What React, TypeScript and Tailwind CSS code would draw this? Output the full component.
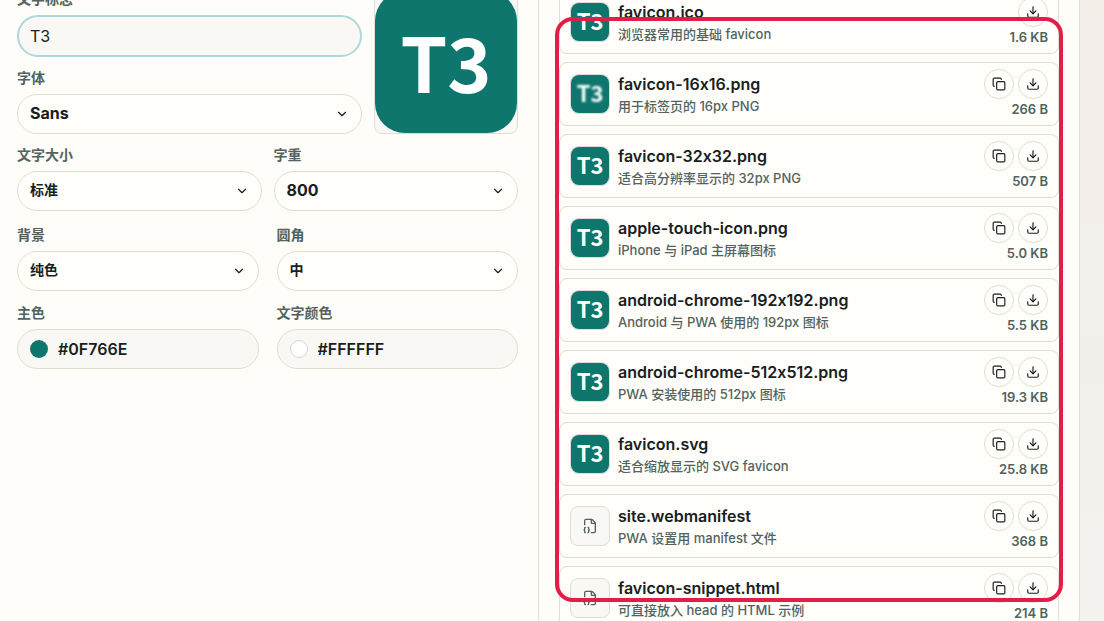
import { ChevronDown, Copy, Download, FileJson2 } from 'lucide-react'
import type { ReactNode } from 'react'

type IconFile = {
  name: string
  detail: string
  size: string
  kind: 'image' | 'soft' | 'code'
  copyable: boolean
}

const files: IconFile[] = [
  { name: 'favicon.ico', detail: '浏览器常用的基础 favicon', size: '1.6 KB', kind: 'image', copyable: false },
  { name: 'favicon-16x16.png', detail: '用于标签页的 16px PNG', size: '266 B', kind: 'soft', copyable: true },
  { name: 'favicon-32x32.png', detail: '适合高分辨率显示的 32px PNG', size: '507 B', kind: 'image', copyable: true },
  { name: 'apple-touch-icon.png', detail: 'iPhone 与 iPad 主屏幕图标', size: '5.0 KB', kind: 'image', copyable: true },
  { name: 'android-chrome-192x192.png', detail: 'Android 与 PWA 使用的 192px 图标', size: '5.5 KB', kind: 'image', copyable: true },
  { name: 'android-chrome-512x512.png', detail: 'PWA 安装使用的 512px 图标', size: '19.3 KB', kind: 'image', copyable: true },
  { name: 'favicon.svg', detail: '适合缩放显示的 SVG favicon', size: '25.8 KB', kind: 'image', copyable: true },
  { name: 'site.webmanifest', detail: 'PWA 设置用 manifest 文件', size: '368 B', kind: 'code', copyable: true },
  { name: 'favicon-snippet.html', detail: '可直接放入 head 的 HTML 示例', size: '214 B', kind: 'code', copyable: true },
]

function Label({ htmlFor, children }: { htmlFor: string; children: ReactNode }) {
  return (
    <label htmlFor={htmlFor} className="text-sm leading-5 font-bold text-[#52635f]">
      {children}
    </label>
  )
}

type SelectFieldProps = { id: string; label: string; options: string[]; latin?: boolean }

function SelectField({ id, label, options, latin = false }: SelectFieldProps) {
  return (
    <div className="flex flex-col gap-1.5">
      <Label htmlFor={id}>{label}</Label>
      <div className="relative">
        <select
          id={id}
          className={`block h-10 w-full appearance-none rounded-full border border-[#deded2] bg-[#fffefa] pr-9 pb-0.5 pl-3 font-bold text-[#17201e] ${latin ? 'text-base' : 'text-sm'}`}
        >
          {options.map((option) => (
            <option key={option}>{option}</option>
          ))}
        </select>
        <ChevronDown className="pointer-events-none absolute top-[13px] right-[13px] h-3.5 w-3.5" />
      </div>
    </div>
  )
}

function ColorField({ id, label, value, swatch }: { id: string; label: string; value: string; swatch: string }) {
  return (
    <div className="flex flex-col gap-1.5">
      <Label htmlFor={id}>{label}</Label>
      <div className="flex h-10 items-center gap-2.5 rounded-full border border-[#deded2] bg-[#f9f8f4] px-3">
        <span className={`h-[18px] w-[18px] shrink-0 rounded-full ${swatch}`} />
        <input id={id} defaultValue={value} className="w-full min-w-0 bg-transparent text-base font-semibold outline-none" />
      </div>
    </div>
  )
}

function Thumbnail({ kind }: { kind: IconFile['kind'] }) {
  if (kind === 'code') {
    return (
      <div className="flex h-10 w-10 shrink-0 items-center justify-center rounded-lg border border-[#deded2] bg-[#f9f8f4] text-[#52635f]">
        <FileJson2 className="h-4 w-4" />
      </div>
    )
  }
  return (
    <div className="h-10 w-10 shrink-0 rounded-lg border border-[#deded2]">
      <div className="flex h-full items-center justify-center rounded-lg bg-[#0f766e] pb-1 font-['Noto_Sans_CJK_SC',sans-serif] text-[22px] leading-none font-bold text-white">
        <span className={kind === 'soft' ? 'blur-[0.8px]' : ''}>T3</span>
      </div>
    </div>
  )
}

function RoundButton({ label, children }: { label: string; children: ReactNode }) {
  return (
    <button
      type="button"
      aria-label={label}
      className="flex h-[30px] w-[30px] items-center justify-center rounded-full border border-[#deded2] bg-[#fffefa]"
    >
      {children}
    </button>
  )
}

function FileRow({ file }: { file: IconFile }) {
  return (
    <li className="flex h-16 items-center gap-2 rounded-lg border border-[#deded2] bg-[#fffefa] px-2.5">
      <Thumbnail kind={file.kind} />
      <div className="min-w-0 flex-1">
        <p className="truncate text-base leading-6 font-semibold">{file.name}</p>
        <p className="truncate text-[13px] leading-5 font-medium text-[#52635f]">{file.detail}</p>
      </div>
      <div className="flex flex-col items-end">
        <div className="flex gap-1">
          {file.copyable && (
            <RoundButton label={`复制 ${file.name}`}>
              <Copy className="h-3.5 w-3.5" />
            </RoundButton>
          )}
          <RoundButton label={`下载 ${file.name}`}>
            <Download className="h-3.5 w-3.5" />
          </RoundButton>
        </div>
        <span className="text-[13px] leading-5 font-semibold text-[#52635f]">{file.size}</span>
      </div>
    </li>
  )
}

export default function App() {
  return (
    <div className="h-screen overflow-hidden bg-linear-to-b from-[#f4eee9] to-[#f3f2ee] pr-6 font-[Inter,'Noto_Sans_CJK_SC',sans-serif] text-[#17201e] [font-feature-settings:'calt'_0]">
      <main className="grid h-full grid-cols-[539fr_540fr] border-r border-[#deded2] bg-[#fffdf9]">
        <section className="border-r border-[#deded2] pr-5 pl-[17px]">
          <form className="-mt-[11px] flex flex-col gap-[11px]">
            <div className="grid grid-cols-[1fr_144px] items-end gap-3">
              <div className="flex flex-col gap-[11px]">
                <div className="flex flex-col gap-1.5">
                  <Label htmlFor="mark">文字标志</Label>
                  <input
                    id="mark"
                    defaultValue="T3"
                    className="h-[42px] w-full rounded-full border-2 border-[#add8db] bg-[#f9f8f4] px-[11px] text-base outline-none"
                  />
                </div>
                <SelectField id="font" label="字体" options={['Sans', 'Serif', 'Mono']} latin />
              </div>
              <div className="h-36 rounded-lg border border-[#deded2] bg-[#f9f8f4]">
                <div className="flex h-full items-center justify-center rounded-[30px] bg-[#0f766e] pb-1 font-['Noto_Sans_CJK_SC',sans-serif] text-[75px] leading-none font-bold text-white">
                  T3
                </div>
              </div>
            </div>
            <div className="grid grid-cols-2 gap-3">
              <SelectField id="size" label="文字大小" options={['标准', '大', '小']} />
              <SelectField id="weight" label="字重" options={['800', '700', '600']} latin />
            </div>
            <div className="grid grid-cols-2 gap-x-[18px] gap-y-3 pt-[3px]">
              <SelectField id="background" label="背景" options={['纯色', '渐变']} />
              <SelectField id="radius" label="圆角" options={['中', '大', '小']} />
              <ColorField id="primary" label="主色" value="#0F766E" swatch="bg-[#0f766e]" />
              <ColorField id="text-color" label="文字颜色" value="#FFFFFF" swatch="border border-[#d5d5d5] bg-white" />
            </div>
          </form>
        </section>

        <section className="relative min-h-0 px-5">
          <ul className="-mt-2.5 flex flex-col gap-2">
            {files.map((file) => (
              <FileRow key={file.name} file={file} />
            ))}
          </ul>
          {/* highlight frame around the file list */}
          <div className="pointer-events-none absolute inset-x-4 top-[17px] bottom-[19px] rounded-[18px] border-4 border-[#e11d48]" />
        </section>
      </main>
    </div>
  )
}
